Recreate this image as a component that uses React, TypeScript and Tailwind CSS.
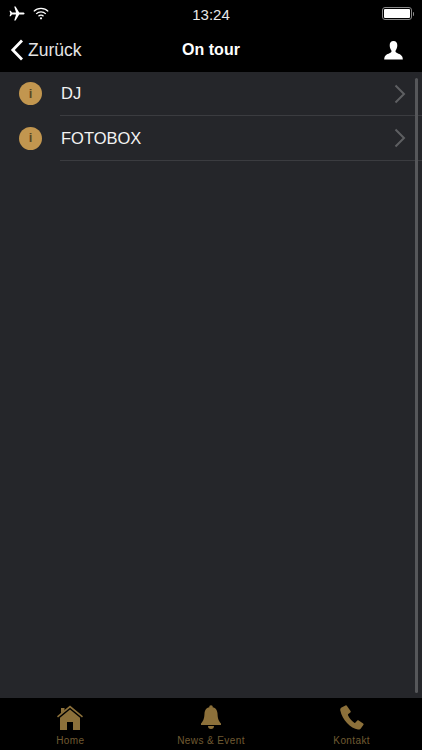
const font = "font-['Liberation_Sans',Arial,sans-serif]";

function Airplane() {
  return (
    <svg width="17" height="15" viewBox="0 0 17 15" fill="white">
      <path d="M16.600 7.500c0-.7-.9-1.100-1.800-1.100h-3.600L7.600.6H6.200l1.900 5.800H4L2.700 4.700H1.500l.8 2.800-.8 2.800h1.200L4 8.600h4.100l-1.900 5.800h1.400l3.600-5.800h3.600c.9 0 1.800-.4 1.800-1.100z" />
    </svg>
  );
}

function Wifi() {
  return (
    <svg width="16" height="13" viewBox="0 0 16 13" fill="none" stroke="white" strokeWidth="1.300">
      <path d="M.8 4.400a10.200 10.200 0 0 1 14.400 0" />
      <path d="M3.200 6.900a6.800 6.800 0 0 1 9.600 0" />
      <path d="M5.500 9.200a3.500 3.500 0 0 1 5 0" />
      <circle cx="8" cy="11.300" r="1.100" fill="white" stroke="none" />
    </svg>
  );
}

function Battery() {
  return (
    <div className="flex items-center">
      <div className="flex h-[13px] w-[30px] rounded-[3px] border border-[#8a8a8a] p-px">
        <div className="flex-1 rounded-[1px] bg-white" />
      </div>
      <div className="ml-px h-[4px] w-[1.5px] rounded-r-sm bg-[#8a8a8a]" />
    </div>
  );
}

function StatusBar() {
  return (
    <div className="relative flex h-[27px] items-center justify-between pl-[8px] pr-[8px]">
      <div className="flex items-center gap-[8px]">
        <Airplane />
        <Wifi />
      </div>
      <span className="absolute left-0 right-0 top-[6px] text-center text-[15px] leading-[17px] text-[#e8e8e8]">13:24</span>
      <Battery />
    </div>
  );
}

function User() {
  return (
    <svg width="19" height="19" viewBox="0 0 19 19" fill="white">
      <path d="M9.500 0C6.900 0 5.700 1.800 5.700 4.300c0 2 .7 3.700 1.500 5 .5.700.4 1.700-.3 2.200-1.400 1-5.200 1.800-6.200 4.300-.3.800-.5 1.900-.5 2.700h18.600c0-.8-.2-1.900-.5-2.700-1-2.500-4.800-3.300-6.200-4.300-.7-.5-.8-1.500-.3-2.200.8-1.300 1.500-3 1.500-5C13.300 1.800 12.100 0 9.500 0z" />
    </svg>
  );
}

function NavBar() {
  return (
    <div className="relative flex h-[45px] items-center justify-between pl-[10px] pr-[19px] pt-[1px]">
      <div className="flex items-center gap-[4px]">
        <svg width="14" height="22" viewBox="0 0 14 22" fill="none" stroke="white" strokeWidth="2.800">
          <path d="M12 1.500 2.800 11 12 20.500" />
        </svg>
        <span className="text-[17.5px] text-[#e4e4e4]">Zurück</span>
      </div>
      <span className="absolute left-0 right-0 text-center text-[16px] font-bold text-white">On tour</span>
      <User />
    </div>
  );
}

function ListRow({ label, height }: { label: string; height: string }) {
  return (
    <div className={`flex items-center ${height}`}>
      <div className="mb-px ml-[19px] flex h-[23px] w-[23px] shrink-0 items-center justify-center rounded-full bg-[#c2964f] text-[13px] font-bold text-[#5c4622]">
        i
      </div>
      <div className="ml-[18px] flex h-full flex-1 items-center justify-between border-b border-[#3b3c40] pl-px pr-[16px]">
        <span className="text-[16.5px] text-[#f2f2f2]">{label}</span>
        <svg width="12" height="20" viewBox="0 0 12 20" fill="none" stroke="#5e5f62" strokeWidth="2">
          <path d="M1.500 1.500 10 10l-8.500 8.500" />
        </svg>
      </div>
    </div>
  );
}

function HomeIcon() {
  return (
    <svg width="26" height="25" viewBox="0 0 26 25" fill="#8c703a">
      <path d="M4 3h3.500v2.500L4 8.500z" />
      <path d="M13 .5 0 11.300l1 1.200L13 2.700l12 9.800 1-1.200z" />
      <path d="M13 4.500 3 12.700V25h7v-8h6v8h7V12.700z" />
    </svg>
  );
}

function BellIcon() {
  return (
    <svg width="20" height="25" viewBox="0 0 20 25" fill="#8c703a">
      <circle cx="10" cy="2" r="1.800" />
      <path d="M10 2c-4 0-6.300 2.800-6.500 6.500-.2 4.500-.7 7-3.500 10v1.500h20v-1.500c-2.800-3-3.300-5.500-3.500-10C16.300 4.800 14 2 10 2z" />
      <path d="M7 21h6a3 3 0 0 1-6 0z" />
    </svg>
  );
}

function PhoneIcon() {
  return (
    <svg width="24" height="25" viewBox="0 0 24 25" fill="#8c703a">
      <path d="M5.500.5 1.500 2.500C.5 3 0 4 .3 5.500c1 5 3.500 9 6.700 12.500 3.300 3.500 7.500 6 11 6.500 1.300.2 2.500-.3 3-1.300l2.500-3.400c.3-.5.2-1-.3-1.400l-4.500-3c-.5-.3-1-.2-1.400.2l-1.800 2c-.3.3-.8.400-1.200.1-2.500-1.700-5-4.500-6.300-7.500-.2-.4-.1-.9.300-1.200l2-1.500c.4-.3.600-.8.400-1.300L7 1c-.3-.6-.9-.8-1.500-.5z" />
    </svg>
  );
}

function TabItem({ label, icon }: { label: string; icon: React.ReactNode }) {
  return (
    <div className="flex flex-1 flex-col items-center">
      <div className="flex h-[26px] items-end">{icon}</div>
      <span className="mt-[4px] text-[10px] leading-[14px] tracking-[0.4px] text-[#705b32]">{label}</span>
    </div>
  );
}

export default function App() {
  return (
    <div className={`flex h-[750px] w-[422px] flex-col overflow-hidden bg-black ${font}`}>
      <StatusBar />
      <NavBar />
      <main className="relative flex-1 bg-[#25262a]">
        <ListRow label="DJ" height="h-[44px]" />
        <ListRow label="FOTOBOX" height="h-[45px]" />
        <div className="absolute bottom-[5px] right-[4px] top-[6px] w-[3px] rounded-full bg-[#56575a]" />
      </main>
      <nav className="flex h-[52px] pt-[6px]">
        <TabItem label="Home" icon={<HomeIcon />} />
        <TabItem label="News & Event" icon={<BellIcon />} />
        <TabItem label="Kontakt" icon={<PhoneIcon />} />
      </nav>
    </div>
  );
}
